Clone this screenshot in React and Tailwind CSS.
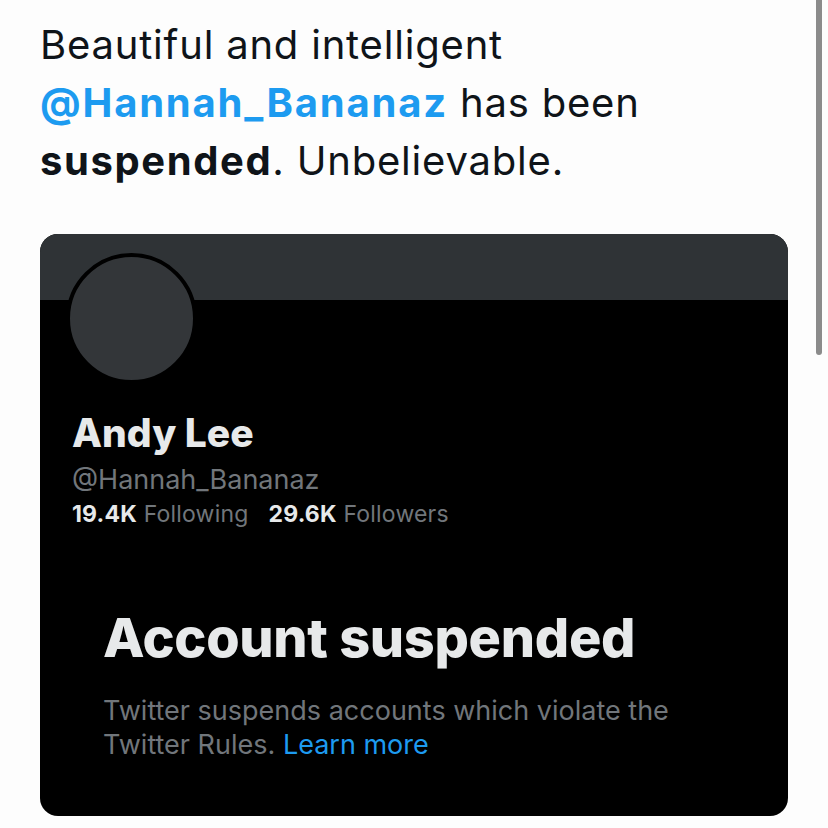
export default function App() {
  return (
    <div className="relative w-[828px] h-[828px] overflow-hidden bg-[#fdfdfd] font-['Inter','Liberation_Sans',sans-serif]">
      {/* scrollbar overlay */}
      <div className="absolute right-[6px] top-0 w-[6px] h-[355px] rounded-b-full bg-[#8b8b8b]" />

      <div className="px-10 pt-[16px]">
        <p className="text-[40px] leading-[58px] text-[#0f1419] tracking-[0.8px] whitespace-nowrap">
          Beautiful and intelligent
          <br />
          <span className="font-bold text-[#1d9bf0] tracking-[1.8px]">@Hannah_Bananaz</span> has been
          <br />
          <span className="font-bold tracking-[1.6px]">suspended</span>. Unbelievable.
        </p>

        <div className="mt-[44px] w-[748px] h-[582px] rounded-[18px] overflow-hidden bg-black">
          <div className="h-[66px] bg-[#2f3336]" />
          <div className="px-8">
            <div className="-mt-[47px] -ml-[6px] w-[131px] h-[131px] rounded-full border-[4px] border-black bg-[#333639]" />
            <div className="mt-[26px] text-[39px] leading-[46px] font-extrabold text-[#e7e9ea]">Andy Lee</div>
            <div className="mt-[8px] text-[27px] leading-[32px] text-[#71767b]">@Hannah_Bananaz</div>
            <div className="mt-[4px] text-[23px] leading-[28px] text-[#71767b] tracking-[0.2px]">
              <span className="font-bold text-[#e7e9ea]">19.4K</span> Following
              <span className="ml-[20px] font-bold text-[#e7e9ea]">29.6K</span> Followers
            </div>
          </div>
          <div className="px-[63px] mt-[78px]">
            <div className="text-[54px] leading-[64px] font-extrabold text-[#e7e9ea] tracking-[-0.3px]">Account suspended</div>
            <p className="mt-[24px] text-[27px] leading-[34px] text-[#71767b]">
              Twitter suspends accounts which violate the
              <br />
              Twitter Rules. <span className="text-[#1d9bf0]">Learn more</span>
            </p>
          </div>
        </div>
      </div>
    </div>
  );
}
